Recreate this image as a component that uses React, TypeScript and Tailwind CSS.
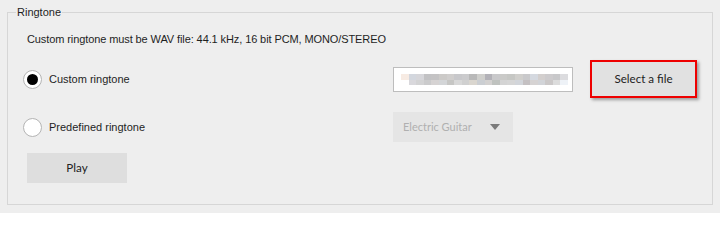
import React from "react";

const cellsTop = [
  "bg-[#f7ebe3]","bg-[#d3d7de]","bg-[#d6d6da]","bg-[#c2c2c4]","bg-[#c4c3c4]","bg-[#cccac8]","bg-[#d0cecd]","bg-[#c8c8cb]","bg-[#cbcbcd]","bg-[#b9b9b9]","bg-[#cfcfcc]","bg-[#b3b2b8]","bg-[#c9c9cb]","bg-[#cacac8]","bg-[#c6c7c4]","bg-[#d0cfcc]","bg-[#c9c9cb]","bg-[#d5d9e0]","bg-[#d3cfce]","bg-[#cdcbcd]","bg-[#c8c8ca]","bg-[#dcdcdf]",
];
const cellsBottom = [
  "bg-[#ffffff]","bg-[#d9d8dc]","bg-[#d3d3d4]","bg-[#cbcbcc]","bg-[#d6d3d3]","bg-[#d3d5d7]","bg-[#c6c6c4]","bg-[#d8d8d8]","bg-[#d0d0d0]","bg-[#dad6cf]","bg-[#cbced2]","bg-[#d3d1d0]","bg-[#bfc2bf]","bg-[#d4d4d4]","bg-[#d6d6d6]","bg-[#d2d5da]","bg-[#c4c0c2]","bg-[#d6d3d3]","bg-[#d2d4d8]","bg-[#cbc8c8]","bg-[#dcdcdc]","bg-[#eef2f7]",
];

function Radio({ checked }: { checked: boolean }) {
  return (
    <div className="w-[19px] h-[19px] rounded-full bg-white border border-[#b4b4b4] flex items-center justify-center shrink-0">
      {checked && <div className="w-[11px] h-[11px] rounded-full bg-black" />}
    </div>
  );
}

export default function App() {
  return (
    <div className="w-[720px] h-[213px] overflow-hidden bg-[#eeeeee] pt-[12px] pl-[7px] text-[11px] text-[#1e1e1e] [font-family:'Liberation_Sans',Arial,sans-serif]">
      <div className="relative w-[706px] h-[193px] border border-[#d6d6d6] pl-[19px] pt-[18px]">
        <span className="absolute left-[8px] -top-[8px] px-[1px] bg-[#eeeeee] leading-[15px]">
          Ringtone
        </span>
        <div className="h-[16px] leading-[16px] tracking-[-0.1px]">
          Custom ringtone must be WAV file: 44.1 kHz, 16 bit PCM, MONO/STEREO
        </div>
        <div className="mt-[13px] flex items-center h-[38px] -ml-[4px]">
          <div className="w-[370px] flex items-center gap-[7px]">
            <Radio checked />
            <span>Custom ringtone</span>
          </div>
          <div className="w-[180px] h-[25px] bg-white border border-[#bdbdbd] flex flex-col justify-center pl-[7px]">
            <div className="flex">
              {cellsTop.map((c, i) => (
                <div key={i} className={`w-[7.6px] h-[6px] ${c}`} />
              ))}
            </div>
            <div className="flex">
              {cellsBottom.map((c, i) => (
                <div key={i} className={`w-[7.6px] h-[5px] ${c}`} />
              ))}
            </div>
          </div>
          <button className="ml-[17px] w-[107px] h-[38px] border-2 border-[#ee0000] bg-[#e1e1e1] shadow-[2px_2px_3px_rgba(0,0,0,0.35)] text-[11.6px] text-[#222] [font-family:Lato,sans-serif]">
            Select a file
          </button>
        </div>
        <div className="mt-[14px] flex items-center h-[30px] -ml-[4px]">
          <div className="w-[370px] flex items-center gap-[7px]">
            <Radio checked={false} />
            <span>Predefined ringtone</span>
          </div>
          <div className="w-[120px] h-[30px] bg-[#e5e5e5] flex items-center justify-between pl-[10px] pr-[13px] text-[11px] text-[#b0b0b0] [font-family:Lato,sans-serif]">
            <span>Electric Guitar</span>
            <svg width="10" height="6" viewBox="0 0 10 6">
              <path d="M0 0 L10 0 L5 6 Z" fill="#7a7a7a" />
            </svg>
          </div>
        </div>
        <button className="mt-[11px] w-[100px] h-[30px] bg-[#dedede] text-[11.6px] text-[#222] [font-family:Lato,sans-serif]">
          Play
        </button>
      </div>
    </div>
  );
}
